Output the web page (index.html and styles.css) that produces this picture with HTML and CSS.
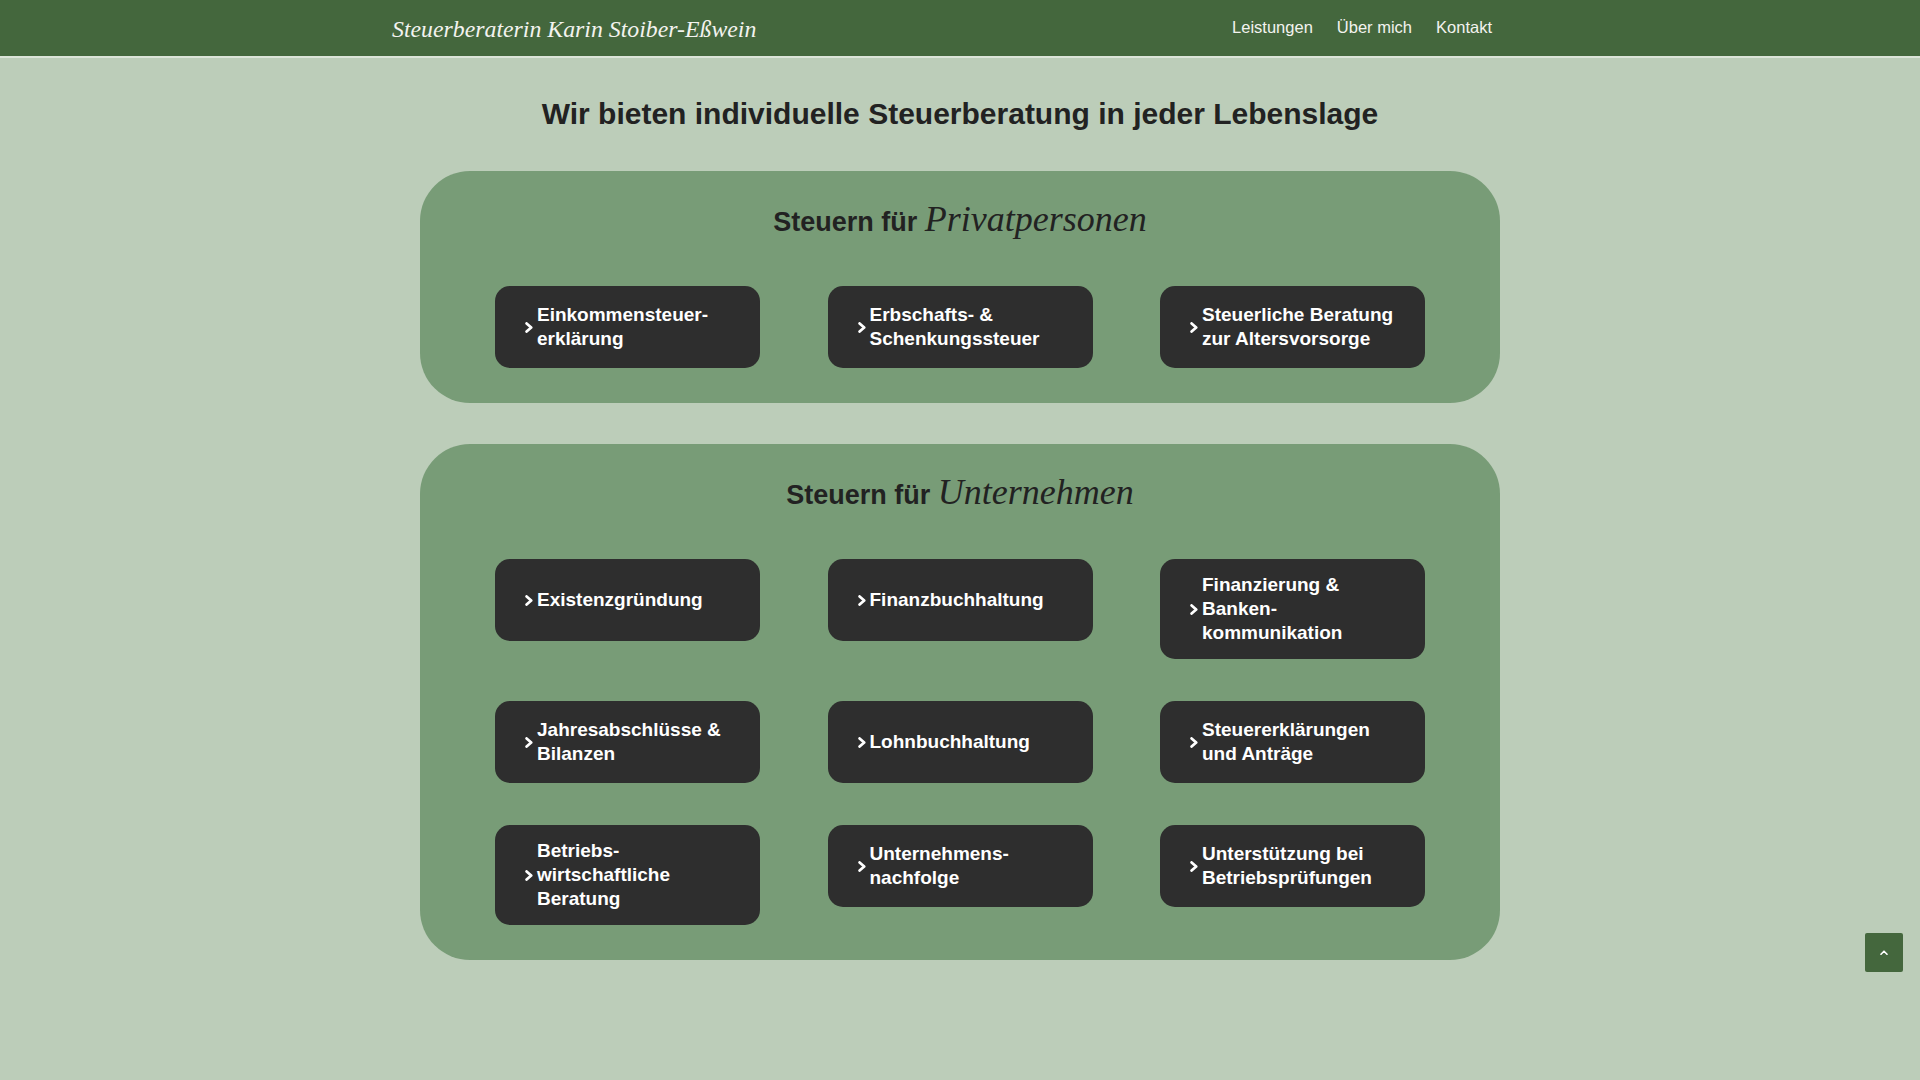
FILE: index.html
```html
<!DOCTYPE html>
<html lang="de">
<head>
  <meta charset="UTF-8">
  <meta name="viewport" content="width=device-width, initial-scale=1.0">
  <title>Leistungen - Steuerberaterin Karin Stoiber-Eßwein</title>
  <link rel="stylesheet" href="styles.css">
</head>
<body>
<!--HEADER-->
  <header class="site-header">
    <div class="header-inner">
      <a class="brand" href="#">Steuerberaterin Karin Stoiber-Eßwein</a>
      <nav class="main-nav">
        <a href="#">Leistungen</a>
        <a href="#">Über mich</a>
        <a href="#">Kontakt</a>
      </nav>
    </div>
  </header>

  <main>
    <h1 class="page-title">Wir bieten individuelle Steuerberatung in jeder Lebenslage</h1>

<!--PRIVATPERSONEN-->
    <section class="service-box">
      <h2>Steuern für <em>Privatpersonen</em></h2>
      <div class="service-grid">
        <a class="service" href="#"><svg class="chev" viewBox="0 0 8 11"><polyline points="1.6,1.4 6.2,5.5 1.6,9.6"/></svg><span>Einkommensteuer-erklärung</span></a>
        <a class="service" href="#"><svg class="chev" viewBox="0 0 8 11"><polyline points="1.6,1.4 6.2,5.5 1.6,9.6"/></svg><span>Erbschafts- &amp; Schenkungssteuer</span></a>
        <a class="service" href="#"><svg class="chev" viewBox="0 0 8 11"><polyline points="1.6,1.4 6.2,5.5 1.6,9.6"/></svg><span>Steuerliche Beratung zur Altersvorsorge</span></a>
      </div>
    </section>

<!--UNTERNEHMEN-->
    <section class="service-box">
      <h2>Steuern für <em>Unternehmen</em></h2>
      <div class="service-grid">
        <a class="service" href="#"><svg class="chev" viewBox="0 0 8 11"><polyline points="1.6,1.4 6.2,5.5 1.6,9.6"/></svg><span>Existenzgründung</span></a>
        <a class="service" href="#"><svg class="chev" viewBox="0 0 8 11"><polyline points="1.6,1.4 6.2,5.5 1.6,9.6"/></svg><span>Finanzbuchhaltung</span></a>
        <a class="service" href="#"><svg class="chev" viewBox="0 0 8 11"><polyline points="1.6,1.4 6.2,5.5 1.6,9.6"/></svg><span>Finanzierung &amp; Banken-kommunikation</span></a>
        <a class="service" href="#"><svg class="chev" viewBox="0 0 8 11"><polyline points="1.6,1.4 6.2,5.5 1.6,9.6"/></svg><span>Jahresabschlüsse &amp; Bilanzen</span></a>
        <a class="service" href="#"><svg class="chev" viewBox="0 0 8 11"><polyline points="1.6,1.4 6.2,5.5 1.6,9.6"/></svg><span>Lohnbuchhaltung</span></a>
        <a class="service" href="#"><svg class="chev" viewBox="0 0 8 11"><polyline points="1.6,1.4 6.2,5.5 1.6,9.6"/></svg><span>Steuererklärungen und Anträge</span></a>
        <a class="service" href="#"><svg class="chev" viewBox="0 0 8 11"><polyline points="1.6,1.4 6.2,5.5 1.6,9.6"/></svg><span>Betriebs-wirtschaftliche Beratung</span></a>
        <a class="service" href="#"><svg class="chev" viewBox="0 0 8 11"><polyline points="1.6,1.4 6.2,5.5 1.6,9.6"/></svg><span>Unternehmens-nachfolge</span></a>
        <a class="service" href="#"><svg class="chev" viewBox="0 0 8 11"><polyline points="1.6,1.4 6.2,5.5 1.6,9.6"/></svg><span>Unterstützung bei Betriebsprüfungen</span></a>
      </div>
    </section>
  </main>

<!--BACK TO TOP-->
  <a class="to-top" href="#" aria-label="Nach oben">
    <svg viewBox="0 0 8 5"><polyline points="1,4.2 4,1.2 7,4.2"/></svg>
  </a>
</body>
</html>
```

FILE: styles.css
```css
body {
  background-color: #bccdb9;
  margin: 0;
  font-family: "Liberation Sans", Arial, sans-serif;
  color: #222;
}
a {
  text-decoration: none;
}

/* header bar */
.site-header {
  background-color: #44673d;
  height: 56px;
  border-bottom: 2px solid #dbe4d8;
}
.header-inner {
  width: 1140px;
  height: 100%;
  margin: 0 auto;
  padding: 0 38px 0 2px;
  box-sizing: border-box;
  display: flex;
  align-items: center;
  justify-content: space-between;
}
.brand {
  font-family: "Liberation Serif", "Times New Roman", serif;
  font-style: italic;
  font-size: 23.8px;
  color: #f3f3ef;
  padding-top: 3px;
}
.main-nav {
  display: flex;
  gap: 24px;
  padding-bottom: 1px;
}
.main-nav a {
  color: #f3f3ef;
  font-size: 16.5px;
}

.page-title {
  text-align: center;
  font-size: 30px;
  line-height: 36px;
  margin: 38px 0 39px;
  color: #222;
}

/* service boxes */
.service-box {
  width: 1080px;
  margin: 0 auto 41px;
  padding: 23px 75px 35px;
  box-sizing: border-box;
  background-color: #789c77;
  border-radius: 50px;
}
.service-box h2 {
  text-align: center;
  font-size: 27px;
  line-height: 50px;
  margin: 0 0 39px;
  color: #222;
}
.service-box h2 em {
  font-family: "Liberation Serif", "Times New Roman", serif;
  font-weight: normal;
  font-size: 36px;
}
.service-grid {
  display: grid;
  grid-template-columns: repeat(3, 265px);
  justify-content: space-between;
  row-gap: 42px;
  align-items: start;
}
.service {
  display: flex;
  align-items: center;
  min-height: 82px;
  padding: 14px 22px 14px 30px;
  box-sizing: border-box;
  background-color: #2e2e2e;
  border-radius: 15px;
  color: white;
  font-weight: bold;
  font-size: 19px;
  line-height: 24px;
}
.chev {
  width: 8px;
  height: 11px;
  flex-shrink: 0;
  margin-right: 4px;
}
.chev polyline,
.to-top polyline {
  fill: none;
  stroke: white;
  stroke-width: 2.7;
  stroke-linecap: round;
  stroke-linejoin: round;
}
.service:hover {
  opacity: 0.85;
}

.to-top {
  position: fixed;
  right: 17px;
  bottom: 108px;
  width: 38px;
  height: 39px;
  border-radius: 2px;
  background-color: #44673d;
  display: flex;
  align-items: center;
  justify-content: center;
}
.to-top svg {
  width: 8px;
  height: 5px;
}
.to-top polyline {
  stroke-width: 1.6;
}
```
